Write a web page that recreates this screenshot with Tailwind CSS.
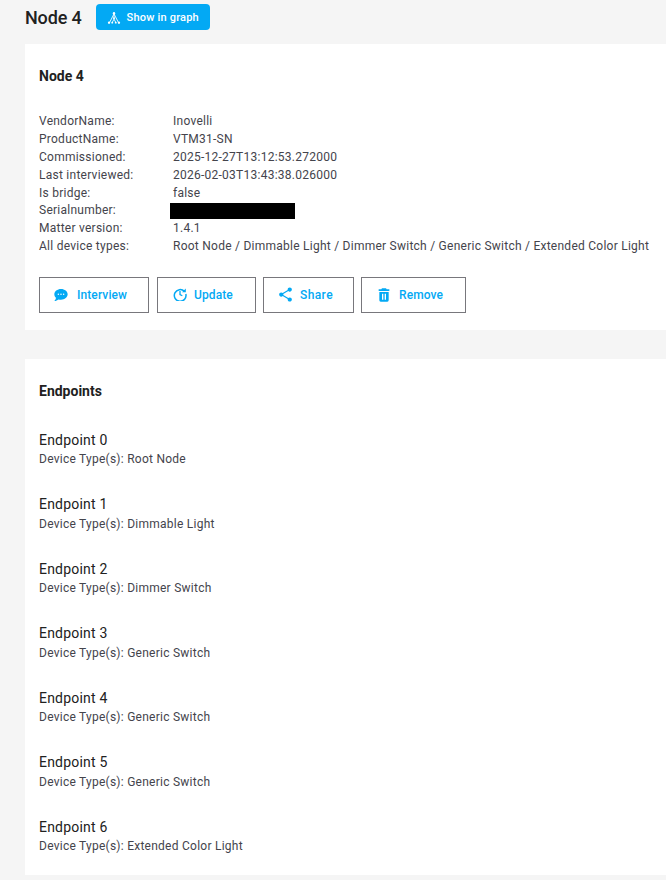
<!DOCTYPE html>
<html>
<head>
<meta charset="utf-8">
<script src="https://cdn.jsdelivr.net/npm/@tailwindcss/browser@4"></script>
</head>
<body class="bg-[#f5f5f5] font-['Roboto',sans-serif] overflow-hidden h-[880px] w-[666px]">
<div class="pl-[25px]">
  <div class="flex items-center h-[44px] pb-[9px] pt-[1px]">
    <h1 class="text-[18px] leading-[28px] font-medium text-[#212121] tracking-[-0.15px]">Node 4</h1>
    <button class="ml-[14px] mt-[-2px] flex items-center h-[26px] w-[114px] pl-[11px] pt-[2px] rounded-[4px] bg-[#03a9f4] text-white text-[11px] font-medium tracking-[0.2px]">
      <svg class="w-[14px] h-[14px] ml-[0.500px] mr-[5.500px]" viewBox="0 0 24 24" fill="none" stroke="currentColor" stroke-width="1.500"><path d="M12 5 L4.500 19.500 M12 5 L19.500 19.500 M12 5 V14 M12 14 L9 19.500 M12 14 L15 19.500"/><circle cx="12" cy="3.800" r="2" fill="currentColor" stroke="none"/><circle cx="12" cy="12.500" r="1.600" fill="currentColor" stroke="none"/><circle cx="3.500" cy="20" r="2" fill="currentColor" stroke="none"/><circle cx="20.500" cy="20" r="2" fill="currentColor" stroke="none"/><circle cx="9" cy="20" r="1.600" fill="currentColor" stroke="none"/><circle cx="15" cy="20" r="1.600" fill="currentColor" stroke="none"/></svg>
      Show in graph
    </button>
  </div>
  <section class="bg-white h-[286px] px-[14px] pt-[23px]">
    <h2 class="text-[14px] leading-[18px] font-bold text-[#212121]">Node 4</h2>
    <div class="mt-[28.400px] grid grid-cols-[134px_1fr] text-[12px] leading-[17.800px] tracking-[0.25px] text-[#44444c] whitespace-nowrap">
      <div>VendorName:</div><div>Inovelli</div>
      <div>ProductName:</div><div>VTM31-SN</div>
      <div>Commissioned:</div><div>2025-12-27T13:12:53.272000</div>
      <div>Last interviewed:</div><div>2026-02-03T13:43:38.026000</div>
      <div>Is bridge:</div><div>false</div>
      <div>Serialnumber:</div><div><div class="bg-black h-[16px] w-[125px] ml-[-3px] mt-[1px]"></div></div>
      <div>Matter version:</div><div>1.4.1</div>
      <div>All device types:</div><div>Root Node / Dimmable Light / Dimmer Switch / Generic Switch / Extended Color Light</div>
    </div>
    <div class="mt-[21.600px] flex text-[12px] font-medium text-[#03a9f4] tracking-[0.1px]">
      <button class="flex items-center h-[36px] w-[110px] border border-[#78777c] pl-[13px] gap-[8px]">
        <svg class="w-[16px] h-[16px] mt-[-1px]" viewBox="0 0 24 24" fill="currentColor"><path d="M12 3C6.500 3 2 6.600 2 11c0 2 .9 3.800 2.400 5.200C4.300 18 3.400 20 2 21c2.500 0 4.700-1 6.300-2.300 1.200.3 2.400.4 3.700.4 5.500 0 10-3.600 10-8.100S17.500 3 12 3z"/><circle cx="8" cy="11" r="1.100" fill="#fff"/><circle cx="12" cy="11" r="1.100" fill="#fff"/><circle cx="16" cy="11" r="1.100" fill="#fff"/></svg>
        Interview
      </button>
      <button class="ml-[8px] flex items-center h-[36px] w-[99px] border border-[#78777c] pl-[15px] gap-[7px]">
        <svg class="w-[14px] h-[14px] mt-[-2px]" viewBox="0 0 24 24" fill="none" stroke="currentColor" stroke-width="2.600"><path d="M19.500 7.500A10 10 0 1 0 22 12"/><path d="M12 7v6l4 2" stroke-width="2.200"/><path d="M22 2.500V9h-6.500z" fill="currentColor" stroke="none"/></svg>
        Update
      </button>
      <button class="ml-[7px] flex items-center h-[36px] w-[91px] border border-[#78777c] pl-[13px] gap-[6px]">
        <svg class="w-[17px] h-[17px] mt-[-2px]" viewBox="0 0 24 24" fill="currentColor"><path d="M18 16.100c-.8 0-1.500.3-2 .8L8.900 12.700c.1-.2.100-.5.100-.7s0-.5-.1-.7L16 7.200c.5.500 1.200.8 2 .8 1.700 0 3-1.300 3-3s-1.300-3-3-3-3 1.300-3 3c0 .2 0 .5.100.7L8 9.800C7.500 9.300 6.800 9 6 9c-1.700 0-3 1.300-3 3s1.300 3 3 3c.8 0 1.500-.3 2-.8l7.100 4.200c-.1.200-.1.400-.1.600 0 1.600 1.300 3 3 3s3-1.400 3-3-1.300-2.900-3-2.900z"/></svg>
        <span class="tracking-[0.4px]">Share</span>
      </button>
      <button class="ml-[7px] flex items-center h-[36px] w-[105px] border border-[#78777c] pl-[14px] gap-[7px]">
        <svg class="w-[16px] h-[16px] mt-[-1px]" viewBox="0 0 24 24" fill="currentColor"><path fill-rule="evenodd" d="M9 2h6l1 1.500h4V6H4V3.500h4zM5 7.500h14V20a2 2 0 0 1-2 2H7a2 2 0 0 1-2-2zM9 10v9h2v-9zm4 0v9h2v-9z"/></svg>
        Remove
      </button>
    </div>
  </section>
  <section class="bg-white mt-[29px] h-[516px] px-[14px] pt-[23px]">
    <h2 class="text-[14px] leading-[18px] font-bold text-[#212121]">Endpoints</h2>
    <div class="mt-[30.750px] flex flex-col gap-[28px] text-[#212121]">
      <div><div class="text-[14px] leading-[18px] tracking-[0.2px]">Endpoint 0</div><div class="text-[12px] leading-[16px] tracking-[0.25px] text-[#44444c] mt-[2.500px]">Device Type(s): Root Node</div></div>
      <div><div class="text-[14px] leading-[18px] tracking-[0.2px]">Endpoint 1</div><div class="text-[12px] leading-[16px] tracking-[0.25px] text-[#44444c] mt-[2.500px]">Device Type(s): Dimmable Light</div></div>
      <div><div class="text-[14px] leading-[18px] tracking-[0.2px]">Endpoint 2</div><div class="text-[12px] leading-[16px] tracking-[0.25px] text-[#44444c] mt-[2.500px]">Device Type(s): Dimmer Switch</div></div>
      <div><div class="text-[14px] leading-[18px] tracking-[0.2px]">Endpoint 3</div><div class="text-[12px] leading-[16px] tracking-[0.25px] text-[#44444c] mt-[2.500px]">Device Type(s): Generic Switch</div></div>
      <div><div class="text-[14px] leading-[18px] tracking-[0.2px]">Endpoint 4</div><div class="text-[12px] leading-[16px] tracking-[0.25px] text-[#44444c] mt-[2.500px]">Device Type(s): Generic Switch</div></div>
      <div><div class="text-[14px] leading-[18px] tracking-[0.2px]">Endpoint 5</div><div class="text-[12px] leading-[16px] tracking-[0.25px] text-[#44444c] mt-[2.500px]">Device Type(s): Generic Switch</div></div>
      <div><div class="text-[14px] leading-[18px] tracking-[0.2px]">Endpoint 6</div><div class="text-[12px] leading-[16px] tracking-[0.25px] text-[#44444c] mt-[2.500px]">Device Type(s): Extended Color Light</div></div>
    </div>
  </section>
</div>
</body>
</html>
